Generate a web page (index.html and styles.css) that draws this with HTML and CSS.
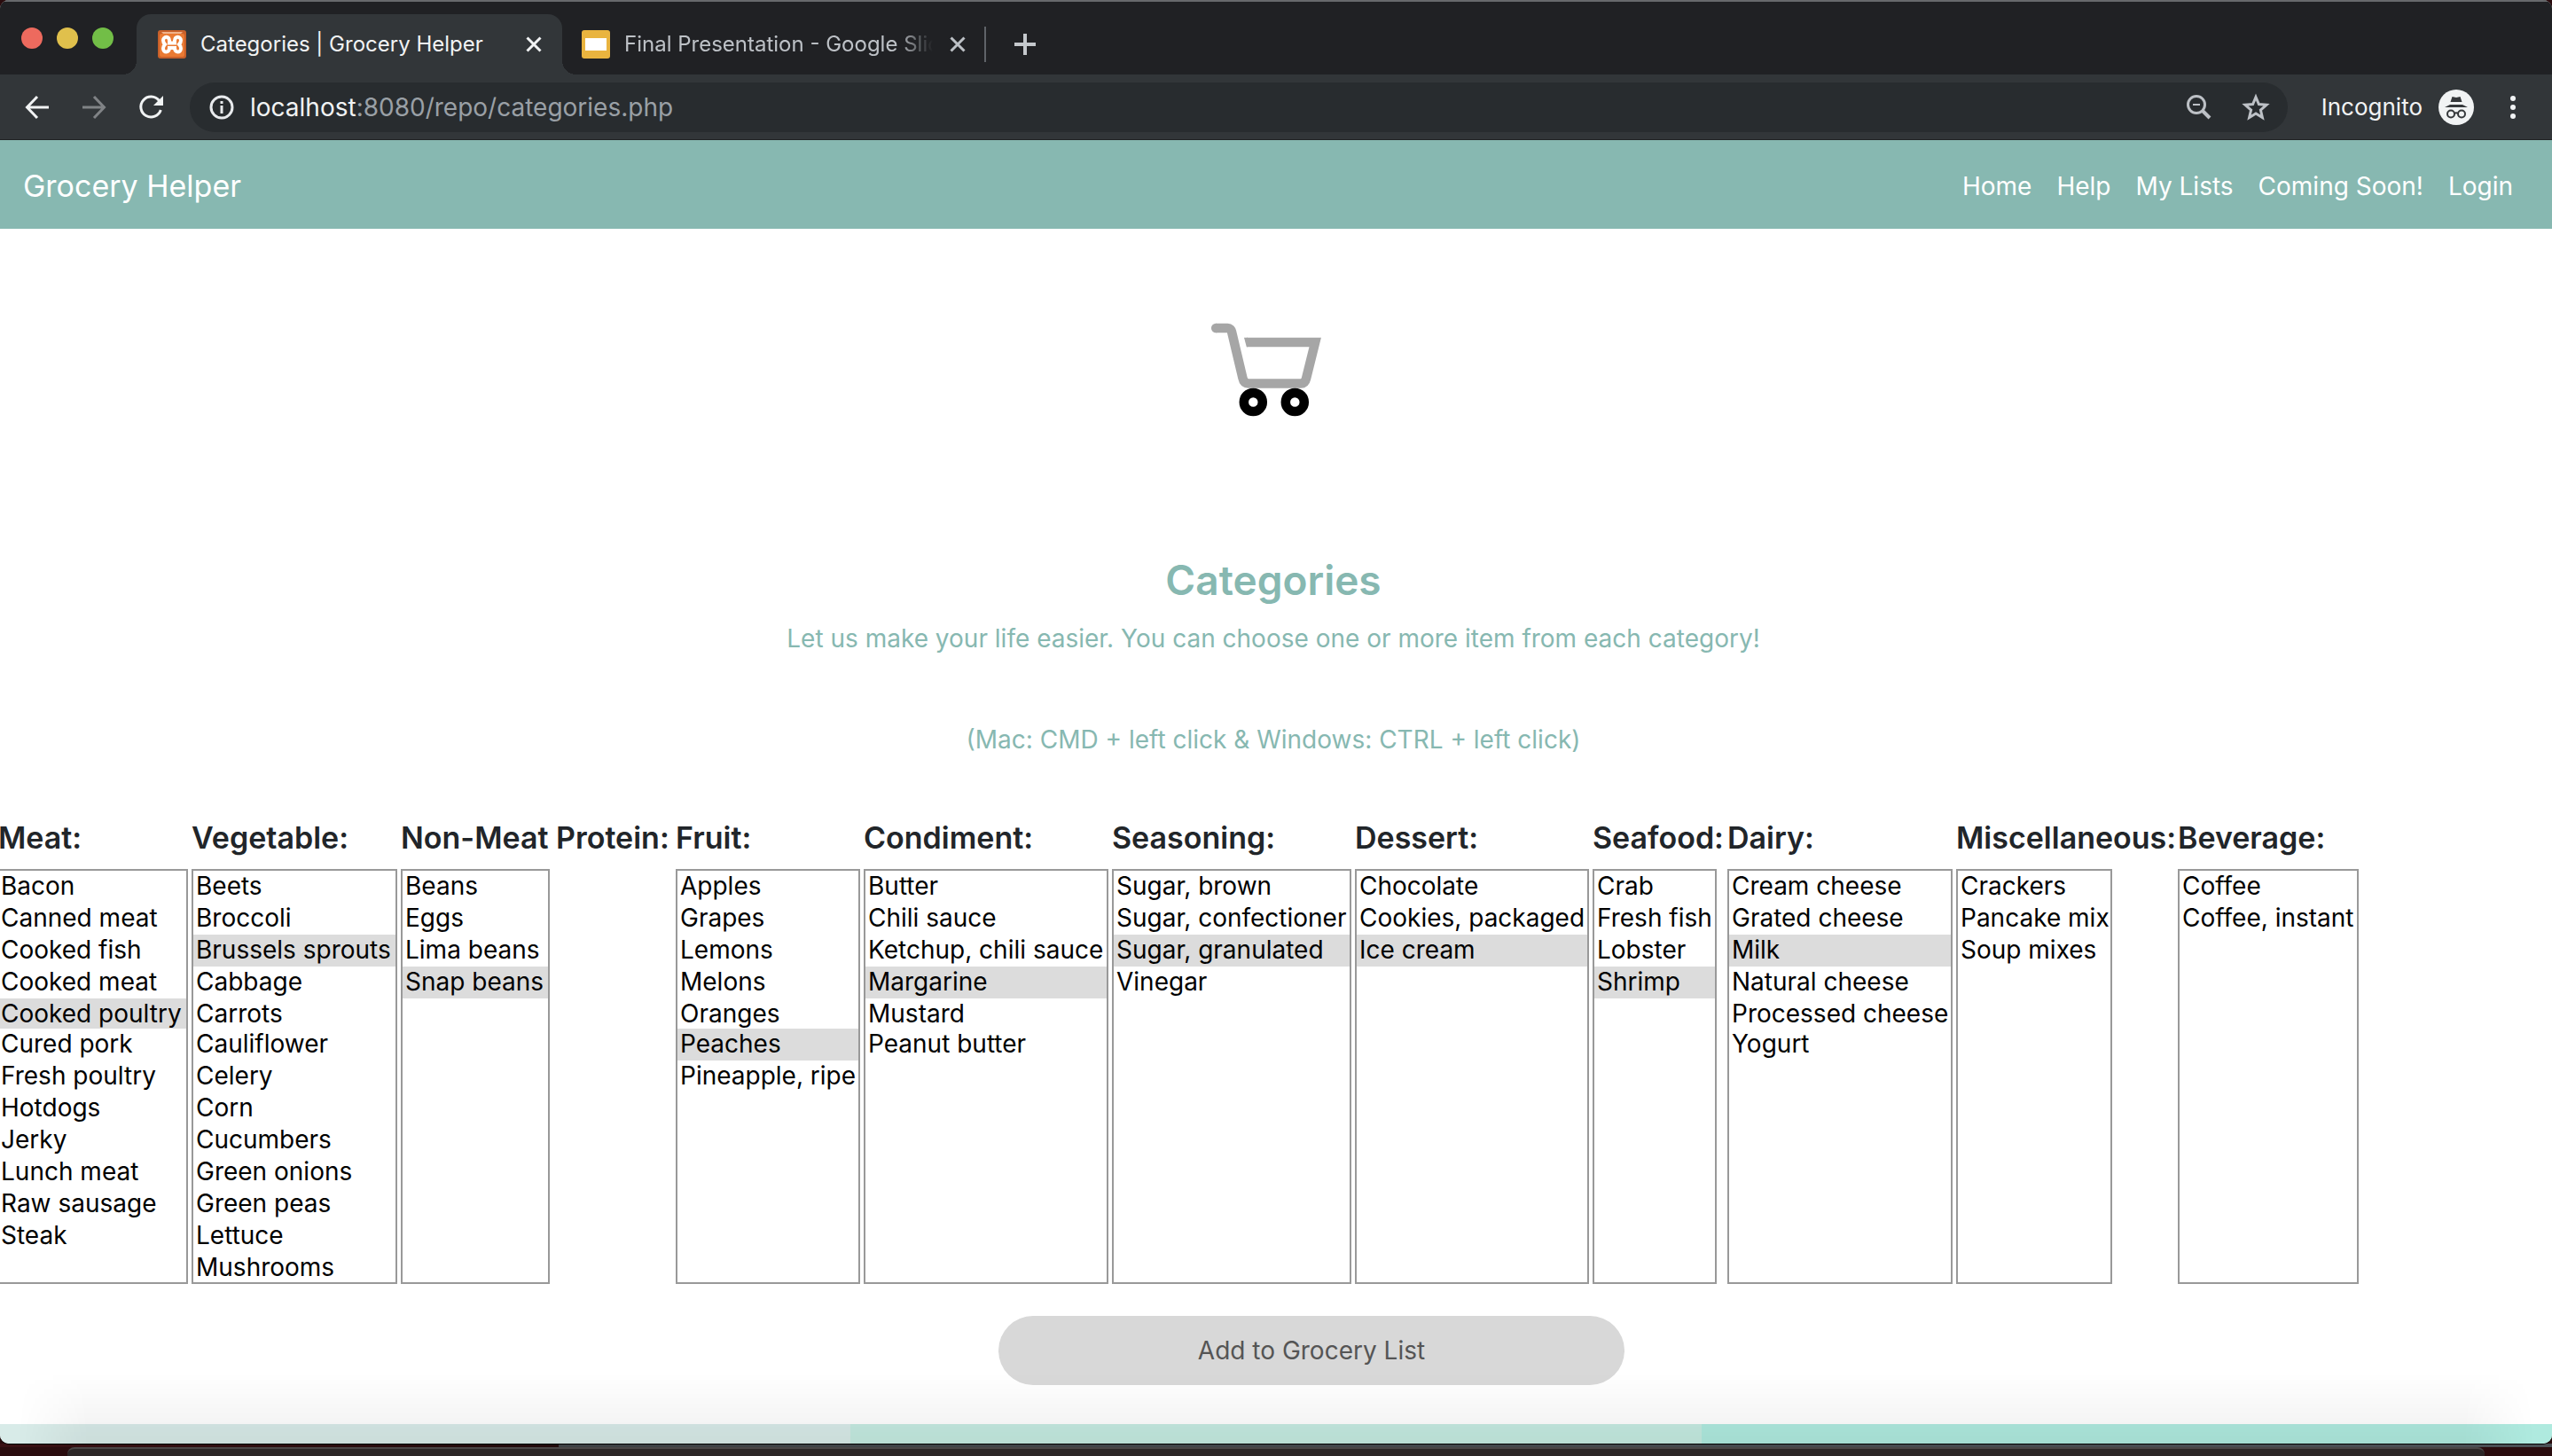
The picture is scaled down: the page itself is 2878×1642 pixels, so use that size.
FILE: index.html
```
<!DOCTYPE html>
<html lang="en">
<head>
<meta charset="utf-8">
<title>Categories | Grocery Helper</title>
<link rel="stylesheet" href="styles.css">
</head>
<body>
<div class="window">
  <div class="chrome">
    <div class="tabstrip">
      <div class="lights">
        <span class="light light-close"></span>
        <span class="light light-min"></span>
        <span class="light light-max"></span>
      </div>
      <div class="tab tab-active">
        <svg class="favicon" viewBox="0 0 32 32" aria-hidden="true">
          <rect width="32" height="32" rx="3" fill="#c8602a"/>
          <rect x="2" y="4" width="28" height="26" rx="2" fill="#ea7a33"/>
          <path d="M4 2h24l-2 2H6z" fill="#f0b38c"/>
          <path d="M13 12C13 6 6 7 6 11.500C6 14 8 16 8 16C8 16 6 18 6 20.500C6 26 13 26 13 20M19 12C19 6 26 7 26 11.500C26 14 24 16 24 16C24 16 26 18 26 20.500C26 26 19 26 19 20M13 11v3.500h6V11M13 21v-1h6v1" fill="none" stroke="#fff" stroke-width="4"/>
        </svg>
        <span class="tab-title">Categories | Grocery Helper</span>
        <button class="icon-btn" type="button" aria-label="Close tab"><svg width="24" height="24" viewBox="0 0 24 24"><path d="M4.500 4.500l15 15M19.500 4.500l-15 15" stroke="#f1f3f4" stroke-width="3" fill="none"/></svg></button>
      </div>
      <div class="tab tab-idle">
        <svg class="favicon" viewBox="0 0 32 32" aria-hidden="true"><rect width="32" height="32" rx="3" fill="#e9b43f"/><rect x="4" y="9" width="24" height="14" fill="#fff"/></svg>
        <span class="tab-title tab-title-fade">Final Presentation - Google Slides</span>
        <button class="icon-btn" type="button" aria-label="Close tab"><svg width="24" height="24" viewBox="0 0 24 24"><path d="M4.500 4.500l15 15M19.500 4.500l-15 15" stroke="#bdc1c6" stroke-width="3" fill="none"/></svg></button>
      </div>
      <button class="icon-btn new-tab" type="button" aria-label="New tab"><svg width="24" height="24" viewBox="0 0 24 24"><path d="M12 0v24M0 12h24" stroke="#c4c8cc" stroke-width="4" fill="none"/></svg></button>
    </div>
    <div class="toolbar">
      <div class="nav-buttons">
        <button class="icon-btn" type="button" aria-label="Back"><svg width="32" height="32" viewBox="0 0 32 32"><path d="M29 16H5M16 4L4.500 16L16 28" stroke="#f1f3f4" stroke-width="3" fill="none"/></svg></button>
        <button class="icon-btn" type="button" aria-label="Forward"><svg width="32" height="32" viewBox="0 0 32 32"><path d="M3 16h24M16 4l11.500 12L16 28" stroke="#808386" stroke-width="3" fill="none"/></svg></button>
        <button class="icon-btn" type="button" aria-label="Reload"><svg width="32" height="32" viewBox="0 0 32 32"><path d="M25.500 8.500A11.500 11.500 0 1 0 27.300 19" stroke="#f1f3f4" stroke-width="3" fill="none"/><path d="M30 3v11H19z" fill="#f1f3f4"/></svg></button>
      </div>
      <div class="omnibox">
        <svg width="28" height="28" viewBox="0 0 28 28" aria-hidden="true"><circle cx="14" cy="14" r="12" fill="none" stroke="#e8eaed" stroke-width="3"/><path d="M12.500 12h3v9h-3zM12.500 7h3v3h-3z" fill="#e8eaed"/></svg>
        <div class="url" role="textbox" aria-label="Address" contenteditable="true" spellcheck="false"><span class="url-host">localhost</span>:8080/repo/categories.php</div>
        <button class="icon-btn" type="button" aria-label="Zoom out"><svg width="32" height="32" viewBox="0 0 32 32"><circle cx="13" cy="13" r="9.500" fill="none" stroke="#bdc1c6" stroke-width="3"/><path d="M9 13h8" stroke="#bdc1c6" stroke-width="2"/><path d="M19.500 19.500L28 28" stroke="#bdc1c6" stroke-width="4"/></svg></button>
        <button class="icon-btn" type="button" aria-label="Bookmark this page"><svg width="32" height="32" viewBox="0 0 32 32"><path d="M16 4.500l3.400 8.100 8.600.7-6.600 5.700 2 8.500L16 23l-7.400 4.500 2-8.500L4 13.300l8.600-.7z" fill="none" stroke="#bdc1c6" stroke-width="3"/></svg></button>
      </div>
      <span class="incognito">Incognito</span>
      <svg width="40" height="40" viewBox="0 0 40 40" aria-hidden="true"><circle cx="20" cy="20" r="20" fill="#f1f3f4"/><path d="M15.500 8l4.500 1 4.500-1 2 6h-13zM7 20l6-3h14l6 3z" fill="#35383b"/><g fill="none" stroke="#35383b" stroke-width="2"><circle cx="14" cy="27.500" r="4"/><circle cx="26" cy="27.500" r="4"/><path d="M18 27q2-1.500 4 0"/></g></svg>
      <button class="icon-btn" type="button" aria-label="Menu"><svg width="8" height="28" viewBox="0 0 8 28"><g fill="#f1f3f4"><circle cx="4" cy="4" r="3"/><circle cx="4" cy="14" r="3"/><circle cx="4" cy="24" r="3"/></g></svg></button>
    </div>
  </div>

  <header class="site-header">
    <a class="brand" href="#">Grocery Helper</a>
    <nav class="site-nav">
      <a href="#">Home</a>
      <a href="#">Help</a>
      <a href="#">My Lists</a>
      <a href="#">Coming Soon!</a>
      <a href="#">Login</a>
    </nav>
  </header>

  <main>
    <div class="intro">
      <svg class="cart" width="132" height="116" viewBox="0 0 132 116" role="img" aria-label="Shopping cart">
        <path d="M9 12H22.500C25 12 26.500 14 27 16L39.500 68.500C40.200 72 42 74.500 46 74.500H105C108.500 74.500 110.300 72 111 69L121.200 28H44" fill="none" stroke="#a6a6a6" stroke-width="10.500" stroke-linejoin="miter" stroke-linecap="butt"/>
        <circle cx="9.200" cy="12" r="5.250" fill="#a6a6a6"/>
        <path d="M41 22.750h4v10.500h-1.200z" fill="#a6a6a6"/>
        <circle cx="51.300" cy="95.500" r="10.500" fill="#fff" stroke="#000" stroke-width="10.500"/>
        <circle cx="98.300" cy="95.500" r="10.500" fill="#fff" stroke="#000" stroke-width="10.500"/>
      </svg>
      <h1>Categories</h1>
      <p>Let us make your life easier. You can choose one or more item from each category!</p>
      <p>(Mac: CMD + left click &amp; Windows: CTRL + left click)</p>
    </div>

    <form class="groceries">
      <div class="pickers">
        <div class="picker"><label for="meat">Meat:</label>
          <select id="meat" multiple size="13"><option>Bacon</option><option>Canned meat</option><option>Cooked fish</option><option>Cooked meat</option><option selected>Cooked poultry</option><option>Cured pork</option><option>Fresh poultry</option><option>Hotdogs</option><option>Jerky</option><option>Lunch meat</option><option>Raw sausage</option><option>Steak</option></select></div>
        <div class="picker"><label for="vegetable">Vegetable:</label>
          <select id="vegetable" multiple size="13"><option>Beets</option><option>Broccoli</option><option selected>Brussels sprouts</option><option>Cabbage</option><option>Carrots</option><option>Cauliflower</option><option>Celery</option><option>Corn</option><option>Cucumbers</option><option>Green onions</option><option>Green peas</option><option>Lettuce</option><option>Mushrooms</option></select></div>
        <div class="picker picker-medium"><label for="protein">Non-Meat Protein:</label>
          <select id="protein" multiple size="13"><option>Beans</option><option>Eggs</option><option>Lima beans</option><option selected>Snap beans</option></select></div>
        <div class="picker"><label for="fruit">Fruit:</label>
          <select id="fruit" multiple size="13"><option>Apples</option><option>Grapes</option><option>Lemons</option><option>Melons</option><option>Oranges</option><option selected>Peaches</option><option>Pineapple, ripe</option></select></div>
        <div class="picker"><label for="condiment">Condiment:</label>
          <select id="condiment" multiple size="13"><option>Butter</option><option>Chili sauce</option><option>Ketchup, chili sauce</option><option selected>Margarine</option><option>Mustard</option><option>Peanut butter</option></select></div>
        <div class="picker"><label for="seasoning">Seasoning:</label>
          <select id="seasoning" multiple size="13"><option>Sugar, brown</option><option>Sugar, confectioner</option><option selected>Sugar, granulated</option><option>Vinegar</option></select></div>
        <div class="picker"><label for="dessert">Dessert:</label>
          <select id="dessert" multiple size="13"><option>Chocolate</option><option>Cookies, packaged</option><option selected>Ice cream</option></select></div>
        <div class="picker picker-small"><label for="seafood">Seafood:</label>
          <select id="seafood" multiple size="13"><option>Crab</option><option>Fresh fish</option><option>Lobster</option><option selected>Shrimp</option></select></div>
        <div class="picker"><label for="dairy">Dairy:</label>
          <select id="dairy" multiple size="13"><option>Cream cheese</option><option>Grated cheese</option><option selected>Milk</option><option>Natural cheese</option><option>Processed cheese</option><option>Yogurt</option></select></div>
        <div class="picker picker-large"><label for="misc">Miscellaneous:</label>
          <select id="misc" multiple size="13"><option>Crackers</option><option>Pancake mix</option><option>Soup mixes</option></select></div>
        <div class="picker"><label for="beverage">Beverage:</label>
          <select id="beverage" multiple size="13"><option>Coffee</option><option>Coffee, instant</option></select></div>
      </div>
      <button class="submit" type="submit">Add to Grocery List</button>
    </form>
  </main>

  <footer class="stripes">
    <span class="stripe stripe-pale"></span>
    <span class="stripe stripe-mid"></span>
    <span class="stripe stripe-mint"></span>
  </footer>
  <div class="shade"></div>
</div>
<div class="desktop"><div class="dock-window"></div></div>
</body>
</html>
```
FILE: styles.css
```
* { box-sizing: border-box; }

body {
  margin: 0;
  min-height: 100vh;
  display: flex;
  flex-direction: column;
  background: #2a0c0e;
  font-family: Inter, "Liberation Sans", sans-serif;
  font-size: 28px;
  line-height: 42px;
}

.window {
  flex: 1;
  display: flex;
  flex-direction: column;
  position: relative;
  overflow: hidden;
  background: #fff;
  border-radius: 10px;
  box-shadow: 0 1px 0 #000;
}

.icon-btn {
  display: flex;
  padding: 0;
  border: 0;
  background: none;
}

/* Browser frame */
.chrome {
  border-top: 2px solid #67696c;
  border-bottom: 1px solid #202224;
  background: #323639;
}

.tabstrip {
  display: flex;
  align-items: center;
  height: 82px;
  padding-left: 24px;
  background: #202124;
}

.lights {
  display: flex;
  gap: 16px;
  margin-right: 26px;
}

.light {
  width: 24px;
  height: 24px;
  border-radius: 50%;
}

.light-close { background: #ed6a5e; }
.light-min { background: #e0c04c; }
.light-max { background: #72be47; }

.tab {
  display: flex;
  align-items: center;
  align-self: flex-end;
  gap: 16px;
  width: 480px;
  height: 68px;
  padding: 0 20px 0 24px;
  font-size: 24px;
  line-height: 32px;
}

.tab-active {
  position: relative;
  border-radius: 16px 16px 0 0;
  background: #323639;
  color: #f1f3f4;
}

.tab-active::before,
.tab-active::after {
  content: "";
  position: absolute;
  bottom: 0;
  width: 16px;
  height: 16px;
}

.tab-active::before {
  right: 100%;
  background: radial-gradient(circle at 0 0, transparent 16px, #323639 16px);
}

.tab-active::after {
  left: 100%;
  background: radial-gradient(circle at 100% 0, transparent 16px, #323639 16px);
}

.tab-idle {
  width: 476px;
  padding: 0 18px 0 22px;
  color: #bdc1c6;
}

.favicon {
  flex: none;
  width: 32px;
  height: 32px;
}

.tab-title {
  flex: 1;
  overflow: hidden;
  white-space: nowrap;
}

.tab-title-fade {
  mask-image: linear-gradient(to left, transparent, #000 40px);
}

.new-tab {
  align-items: center;
  height: 40px;
  margin-top: 14px;
  padding-left: 32px;
  border-left: 2px solid #5f6368;
}

.toolbar {
  display: flex;
  align-items: center;
  height: 73px;
  padding: 0 40px 0 26px;
}

.nav-buttons {
  display: flex;
  gap: 32px;
  margin-right: 28px;
}

.omnibox {
  flex: 1;
  display: flex;
  align-items: center;
  gap: 32px;
  height: 56px;
  margin-right: 38px;
  padding: 0 20px 0 22px;
  border-radius: 28px;
  background: #282c2f;
  color: #9aa0a6;
}

.url {
  flex: 1;
  margin-left: -14px;
}

.url-host { color: #f1f3f4; }

.incognito {
  margin-right: 18px;
  font-size: 26px;
  color: #f1f3f4;
}

.toolbar > .icon-btn { margin-left: 40px; }

/* Site header */
.site-header {
  display: flex;
  align-items: center;
  justify-content: space-between;
  height: 100px;
  padding: 4px 44px 0 26px;
  background: #87b8b1;
}

.site-header a {
  color: #fff;
  text-decoration: none;
}

.brand { font-size: 34px; }

.site-nav {
  display: flex;
  gap: 28px;
}

/* Intro */
main {
  flex: 1;
  padding-right: 6px;
}

.intro {
  display: flex;
  flex-direction: column;
  align-items: center;
  padding-top: 100px;
  color: #87b8b1;
  text-align: center;
}

.cart {
  margin: 0 16px 152px 0;
}

.intro h1 {
  margin: 0 0 17px;
  font-size: 46px;
  font-weight: 600;
  line-height: 56px;
}

.intro p {
  margin: 0 0 72px;
}

.intro p:last-child { margin-bottom: 70px; }

/* Category lists */
.pickers {
  display: grid;
  grid-template-columns: 214px 232px 306px 208px 276px 270px 264px 148px 254px 246px 204px;
  column-gap: 4px;
  margin-left: -2px;
}

.picker label {
  display: block;
  margin-bottom: 15px;
  font-size: 34px;
  font-weight: 600;
  line-height: 40px;
  white-space: nowrap;
  color: #212529;
}

.picker select {
  display: block;
  width: 100%;
  height: 468px;
  padding: 0;
  overflow: hidden;
  border: 2px solid #999;
  border-radius: 0;
  outline: 0;
  background: #fff;
  font: inherit;
  color: #000;
}

.picker:first-child select { border-left: 0; }
.picker-small select { width: 140px; }
.picker-medium select { width: 168px; }
.picker-large select { width: 176px; }

.picker option {
  height: 36px;
  min-height: 0;
  padding: 0 3px;
  line-height: 36px;
  color: #000;
}

.picker option:nth-child(5) { height: 34px; }

.picker option:checked {
  background: #dcdcdc linear-gradient(#dcdcdc, #dcdcdc);
  color: #000;
}

.groceries {
  display: flex;
  flex-direction: column;
}

.submit {
  align-self: center;
  width: 706px;
  height: 78px;
  margin: 36px 0 0 86px;
  border: 0;
  border-radius: 39px;
  background: #d8d8d8;
  font: inherit;
  color: #555;
}

/* Footer */
.stripes {
  display: grid;
  grid-template-columns: repeat(3, 1fr);
  height: 22px;
}

.stripe-pale { background: #d8ebe8; }
.stripe-mid { background: #c5ebe1; }
.stripe-mint { background: #afeadf; }

.shade {
  position: absolute;
  inset: auto 0 0;
  height: 80px;
  background: linear-gradient(transparent, rgba(0, 0, 0, .06));
  mask-image: linear-gradient(to right, transparent 20px, #000 100px, #000 calc(100% - 100px), transparent calc(100% - 20px));
  pointer-events: none;
}

.desktop {
  height: 14px;
  padding: 4px 76px 0;
  background: linear-gradient(to right, #3a1114, #210a0b 630px, #3d4144 630px, #4b5055) top / 100% 4px no-repeat, #2a0c0e;
}

.dock-window {
  height: 10px;
  border-top: 2px solid #4a4646;
  border-radius: 8px 8px 0 0;
  background: #2c2727;
}
```
